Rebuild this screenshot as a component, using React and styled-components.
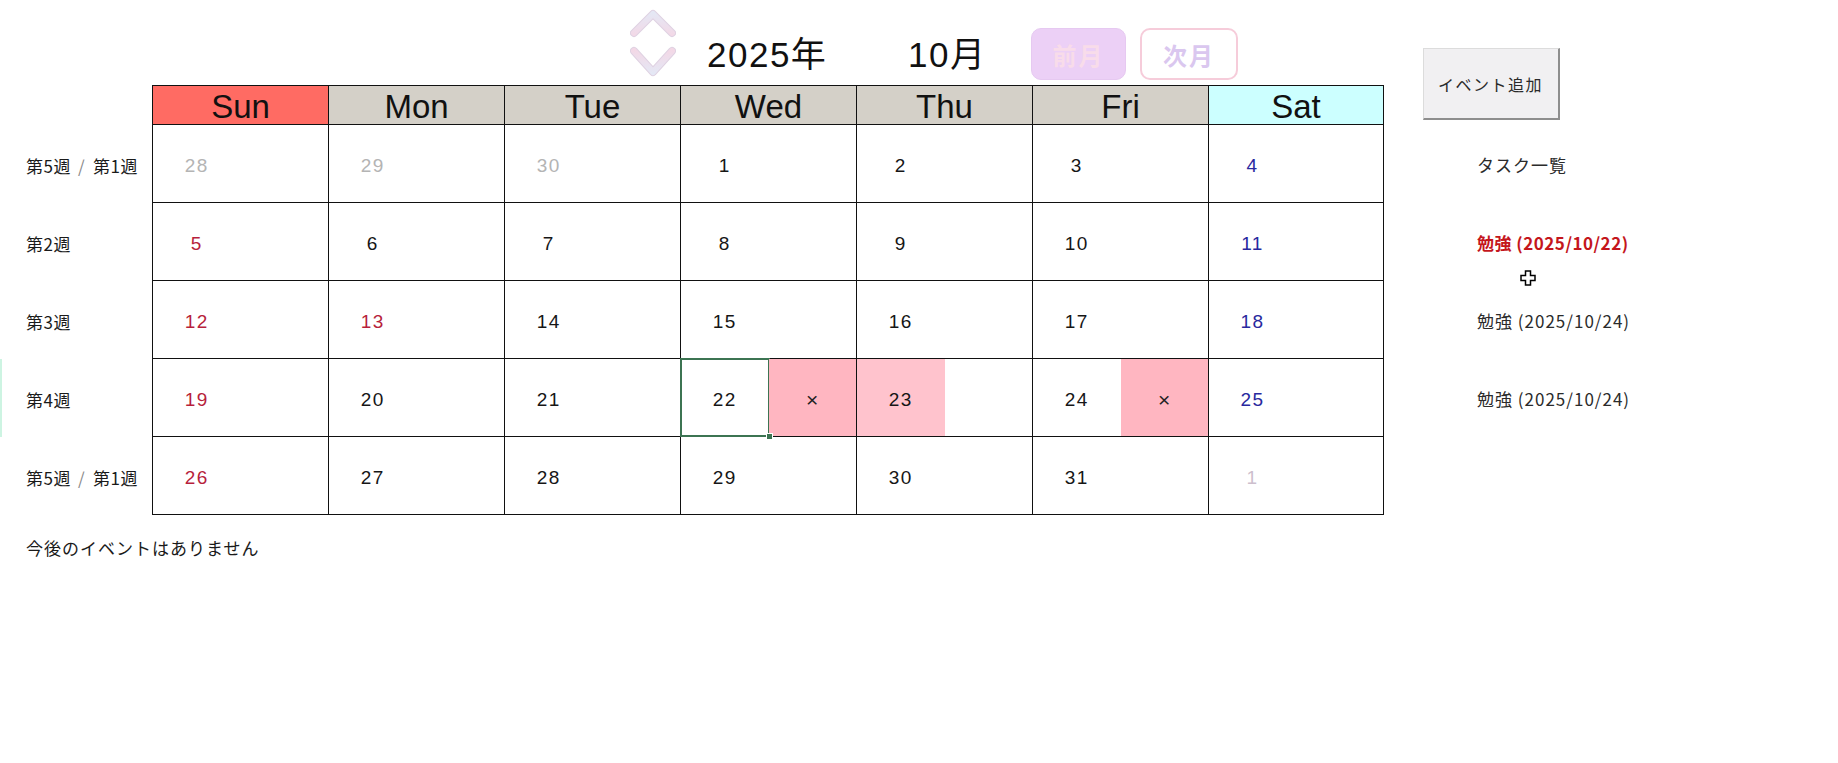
import React from "react";
import styled, { createGlobalStyle, css } from "styled-components";

const GlobalStyle = createGlobalStyle`
  html, body {
    margin: 0;
    padding: 0;
    background: #fff;
    overflow: hidden;
  }
`;

const LATIN = `"Liberation Sans", "Noto Sans CJK JP", sans-serif`;
const JP = `"Noto Sans CJK JP", "Liberation Sans", sans-serif`;

const Page = styled.div`
  display: flex;
  align-items: flex-start;
  width: 1838px;
  height: 763px;
  background: #fff;
  color: #1a1a1a;
  font-family: ${JP};
`;

const Main = styled.div`
  width: 1384px;
  flex: none;
  display: flex;
  flex-direction: column;
`;

const TopBar = styled.div`
  height: 85px;
  box-sizing: border-box;
  display: flex;
  align-items: flex-start;
  padding-left: 630px;
`;

const ChevronBox = styled.svg`
  flex: none;
  margin-top: 9px;
  width: 46px;
  height: 68px;
`;

const YearLabel = styled.div`
  flex: none;
  width: 201px;
  margin-left: 31px;
  margin-top: 35px;
  font-family: ${LATIN};
  font-size: 35px;
  line-height: 40px;
  letter-spacing: 1.5px;
  color: #111;
`;

const MonthLabel = styled(YearLabel)`
  width: 123px;
  margin-left: 0;
`;

const NavButton = styled.div`
  flex: none;
  box-sizing: border-box;
  width: ${p => (p.filled ? 95 : 98)}px;
  height: 52px;
  margin-top: 28px;
  margin-right: 14px;
  border-radius: 10px;
  display: flex;
  align-items: center;
  justify-content: center;
  font-family: ${JP};
  font-weight: 700;
  font-size: 24px;
  letter-spacing: 2px;
  ${p =>
    p.filled
      ? css`
          background: #ecd0f6;
          border: 1px solid #e6c9f1;
          color: #f8dcea;
        `
      : css`
          background: #fff;
          border: 2px solid #f6ccda;
          color: #dac7ef;
        `}
`;

const Calendar = styled.div`
  display: grid;
  grid-template-columns: 152px repeat(7, 176px);
  grid-template-rows: 40px repeat(5, 78px);
`;

const WeekLabel = styled.div`
  box-sizing: border-box;
  padding-left: 26px;
  padding-top: 3px;
  display: flex;
  align-items: center;
  font-size: 17px;
  letter-spacing: 0.5px;
  color: #1a1a1a;
  white-space: nowrap;
  ${p =>
    p.marked &&
    css`
      box-shadow: inset 2px 0 0 #cdf4e2;
    `}
`;

const Slash = styled.span`
  color: #8a8a8a;
  margin: 0 8px 0 7px;
`;

const headBg = { sun: "#ff6b63", sat: "#ccffff", day: "#d4d0c8" };

const HeadCell = styled.div`
  box-sizing: border-box;
  border-top: 1px solid #111;
  border-left: 1px solid #111;
  border-bottom: 1px solid #111;
  ${p => p.last && "border-right: 1px solid #111;"}
  background: ${p => headBg[p.kind]};
  padding-top: 3px;
  text-align: center;
  font-family: ${LATIN};
  font-size: 33px;
  line-height: 35px;
  color: #111;
`;

const DayCell = styled.div`
  box-sizing: border-box;
  border-left: 1px solid #111;
  border-bottom: 1px solid #111;
  ${p => p.last && "border-right: 1px solid #111;"}
  display: grid;
  grid-template-columns: 1fr 1fr;
`;

const Half = styled.div`
  position: relative;
  display: flex;
  align-items: center;
  justify-content: center;
  padding-top: 4px;
  background: ${p => p.bg || "transparent"};
  ${p =>
    p.selected &&
    css`
      &::after {
        content: "";
        position: absolute;
        top: -1px;
        left: -1px;
        right: -1px;
        bottom: -1px;
        border: 2px solid #3c7452;
      }
      &::before {
        content: "";
        position: absolute;
        right: -4px;
        bottom: -4px;
        width: 5px;
        height: 5px;
        background: #3c7452;
        border: 1px solid #fff;
        z-index: 1;
      }
    `}
`;

const DayNum = styled.span`
  font-family: ${LATIN};
  font-size: 19px;
  letter-spacing: 1.5px;
  color: ${p => p.tone};
`;

const Mark = styled.span`
  font-family: ${LATIN};
  font-size: 21px;
  color: #222;
`;

const Note = styled.div`
  margin-top: 20px;
  padding-left: 26px;
  font-size: 17px;
  letter-spacing: 1px;
  color: #1a1a1a;
`;

const Side = styled.div`
  position: relative;
  flex: 1;
  padding-left: 39px;
  display: grid;
  grid-template-rows: 124px repeat(4, 78px);
`;

const AddButton = styled.div`
  align-self: start;
  box-sizing: border-box;
  margin-top: 48px;
  width: 137px;
  height: 72px;
  background: #f1f0f2;
  border-top: 1px solid #dcdcdc;
  border-left: 1px solid #dcdcdc;
  border-right: 2px solid #8e8e8e;
  border-bottom: 2px solid #8e8e8e;
  padding-left: 14px;
  display: flex;
  align-items: center;
  font-size: 16px;
  letter-spacing: 1.5px;
  color: #2a2a2a;
`;

const TaskItem = styled.div`
  padding-left: 54px;
  padding-top: 3px;
  display: flex;
  align-items: center;
  font-size: 17px;
  letter-spacing: ${p => (p.urgent ? 0.5 : 1)}px;
  white-space: nowrap;
  color: ${p => (p.urgent ? "#c4161c" : "#2b2b2b")};
  font-weight: ${p => (p.urgent ? 700 : 400)};
`;

const Cursor = styled.svg`
  position: absolute;
  left: 136px;
  top: 270px;
  width: 16px;
  height: 16px;
`;

const DAYS = ["Sun", "Mon", "Tue", "Wed", "Thu", "Fri", "Sat"];

const run = (from, to) => {
  const out = [];
  for (let d = from; d <= to; d++) out.push({ d });
  return out;
};

const weeks = [
  {
    label: ["第5週", "第1週"],
    days: [{ d: 28, other: true }, { d: 29, other: true }, { d: 30, other: true }, ...run(1, 4)]
  },
  { label: ["第2週"], days: run(5, 11) },
  { label: ["第3週"], days: run(12, 18) },
  { label: ["第4週"], days: run(19, 25), marked: true },
  { label: ["第5週", "第1週"], days: [...run(26, 31), { d: 1, other: true }] }
];

const holidays = [13];

const events = {
  22: { selected: true, mark: true },
  23: { numBg: "#ffc3cd" },
  24: { mark: true }
};

const toneOf = (day, col) => {
  if (day.other) return col === 6 ? "#cdbfcd" : "#b4b4b4";
  if (col === 0 || holidays.includes(day.d)) return "#b71f3c";
  if (col === 6) return "#28289e";
  return "#161616";
};

function Chevrons() {
  return (
    <ChevronBox viewBox="0 0 46 68">
      <defs>
        <linearGradient id="chev" x1="0" y1="0" x2="0" y2="68" gradientUnits="userSpaceOnUse">
          <stop offset="0" stopColor="#e2eaf7" />
          <stop offset="0.4" stopColor="#f3d8e6" />
          <stop offset="0.6" stopColor="#f3d8e6" />
          <stop offset="1" stopColor="#e2eaf7" />
        </linearGradient>
      </defs>
      <g fill="none" strokeLinecap="round" strokeLinejoin="round">
        <path d="M4 24 L23 5 L42 24 M4 42 L23 63 L42 42" stroke="#dfd2e2" strokeWidth="8" />
        <path d="M4 24 L23 5 L42 24 M4 42 L23 63 L42 42" stroke="url(#chev)" strokeWidth="6" />
      </g>
    </ChevronBox>
  );
}

export default function App() {
  return (
    <Page>
      <GlobalStyle />
      <Main>
        <TopBar>
          <Chevrons />
          <YearLabel>2025年</YearLabel>
          <MonthLabel>10月</MonthLabel>
          <NavButton filled>前月</NavButton>
          <NavButton>次月</NavButton>
        </TopBar>

        <Calendar>
          <div />
          {DAYS.map((name, i) => (
            <HeadCell key={name} kind={i === 0 ? "sun" : i === 6 ? "sat" : "day"} last={i === 6}>
              {name}
            </HeadCell>
          ))}
          {weeks.map((week, w) => (
            <React.Fragment key={w}>
              <WeekLabel marked={week.marked}>
                {week.label[0]}
                {week.label[1] && (
                  <>
                    <Slash>/</Slash>
                    {week.label[1]}
                  </>
                )}
              </WeekLabel>
              {week.days.map((day, col) => {
                const ev = (!day.other && events[day.d]) || {};
                return (
                  <DayCell key={col} last={col === 6}>
                    <Half bg={ev.numBg} selected={ev.selected}>
                      <DayNum tone={toneOf(day, col)}>{day.d}</DayNum>
                    </Half>
                    <Half bg={ev.mark ? "#ffb6c1" : undefined}>
                      {ev.mark && <Mark>×</Mark>}
                    </Half>
                  </DayCell>
                );
              })}
            </React.Fragment>
          ))}
        </Calendar>

        <Note>今後のイベントはありません</Note>
      </Main>

      <Side>
        <AddButton>イベント追加</AddButton>
        <TaskItem>タスク一覧</TaskItem>
        <TaskItem urgent>勉強 (2025/10/22)</TaskItem>
        <TaskItem>勉強 (2025/10/24)</TaskItem>
        <TaskItem>勉強 (2025/10/24)</TaskItem>
        <Cursor viewBox="0 0 16 16">
          <path
            d="M5.5 1 H10.5 V5.5 H15 V10.5 H10.5 V15 H5.5 V10.5 H1 V5.5 H5.5 Z"
            fill="#fff"
            stroke="#000"
            strokeWidth="1.5"
          />
        </Cursor>
      </Side>
    </Page>
  );
}
